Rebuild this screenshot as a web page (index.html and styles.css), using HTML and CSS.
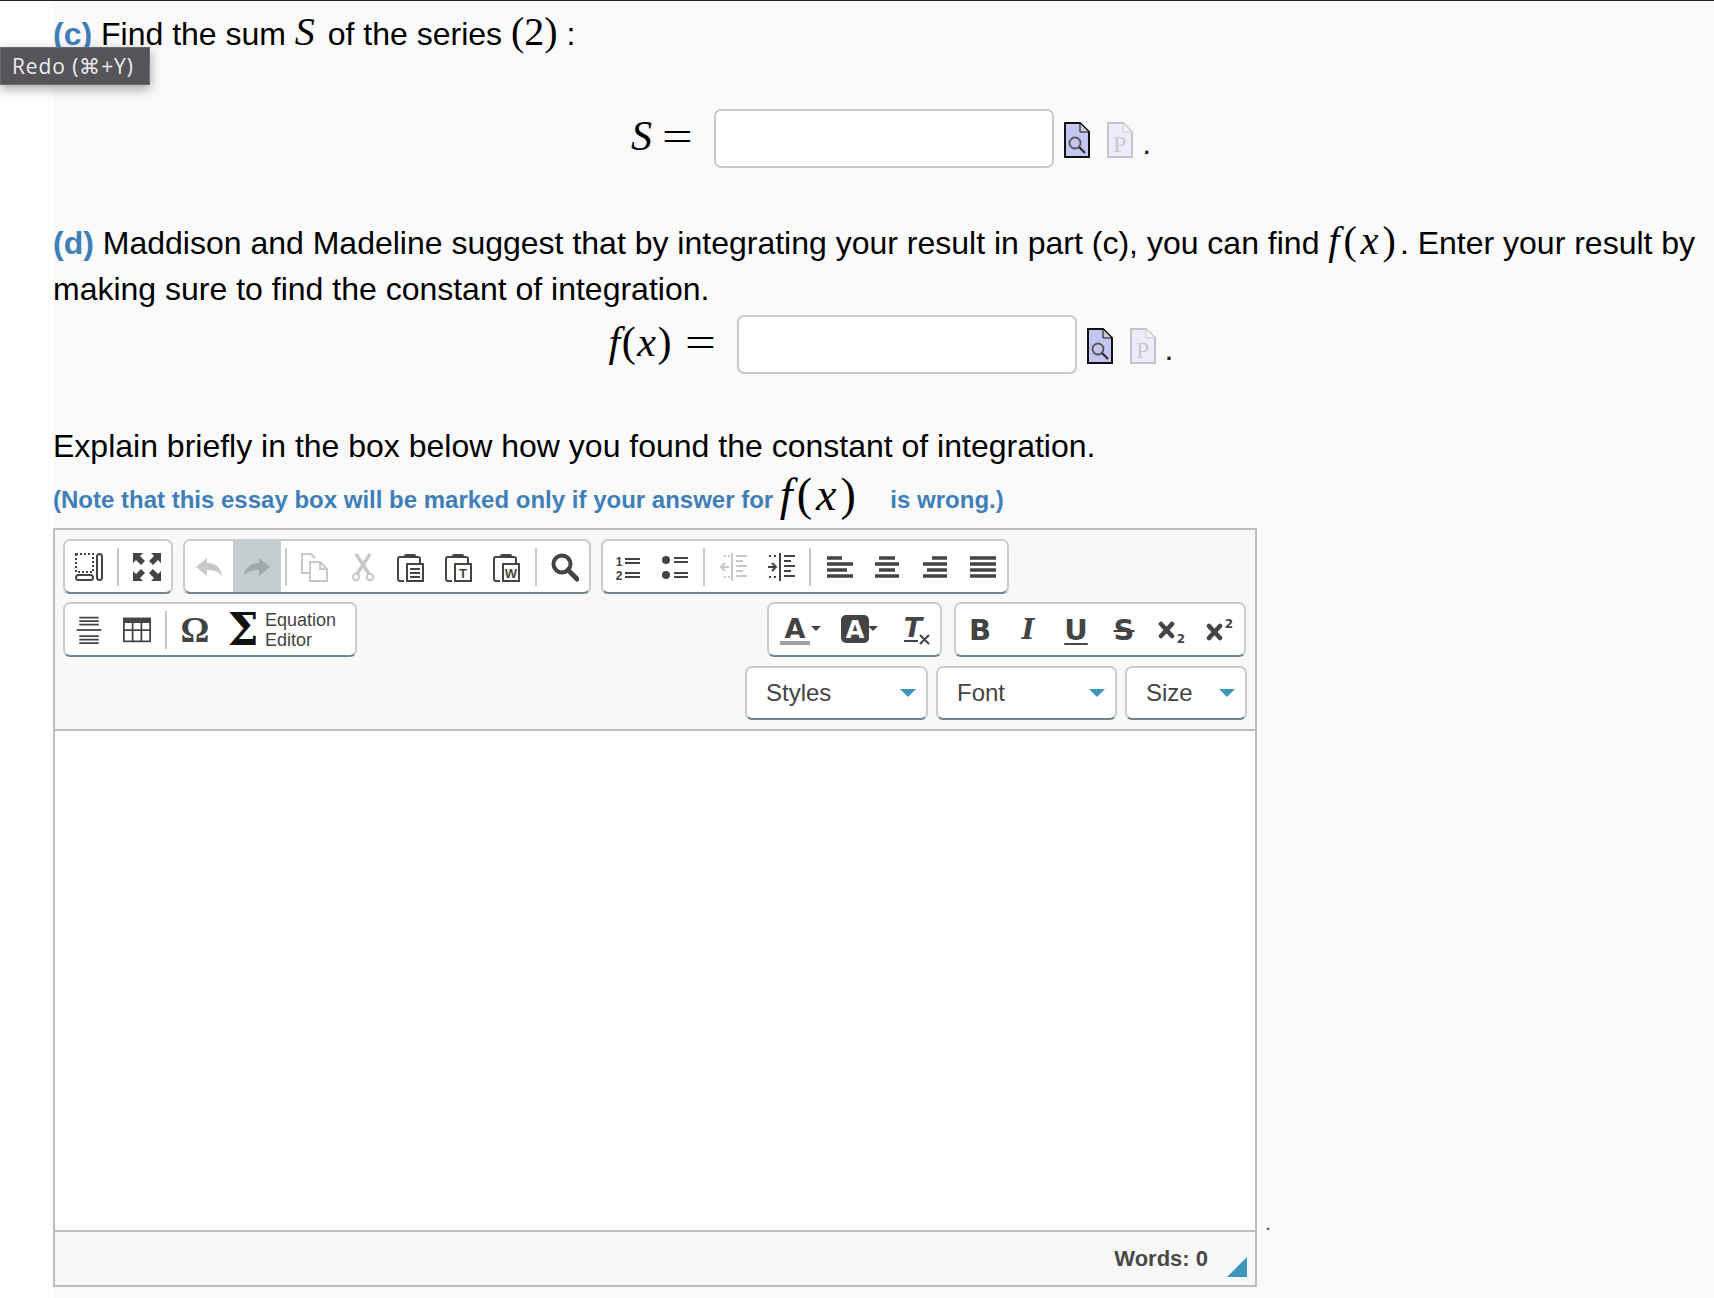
FILE: index.html
```html
<!DOCTYPE html>
<html lang="en">
<head>
<meta charset="utf-8">
<title>Question</title>
<link rel="stylesheet" href="styles.css">
</head>
<body>
<div class="tooltip">Redo (⌘+Y)</div>
<main class="panel">
  <p class="line first"><b class="part">(c)</b> Find the sum <i class="m big sp">S</i> of the series <span class="m big up">(2)</span> :</p>
  <div class="answer row-s">
    <span class="m eq"><i>S</i> <span class="equals">=</span></span>
    <span class="input"></span>
    <svg class="doc" viewBox="0 0 26 36"><path class="doc-a" d="M1 1h15l9 9v25H1z"/><path class="fold-a" d="M16 1v9h9z"/><circle cx="11" cy="21" r="5.500" fill="none" stroke="#555" stroke-width="1.800"/><path d="M15 25l6 6" stroke="#333" stroke-width="2.400"/></svg>
    <svg class="doc" viewBox="0 0 26 36"><path class="doc-b" d="M1 1h15l9 9v25H1z"/><path class="fold-b" d="M16 1v9h9z"/><text x="6" y="30" class="doc-p">P</text></svg>
    <span class="stop">.</span>
  </div>
  <p class="line part-d"><b class="part">(d)</b> Maddison and Madeline suggest that by integrating your result in part (c), you can find <span class="m big sp"><i>f</i>(<i>x</i>)</span>. Enter your result by<br>making sure to find the constant of integration.</p>
  <div class="answer row-f">
    <span class="m eq eq-f"><i>f</i>(<i>x</i>) <span class="equals">=</span></span>
    <span class="input"></span>
    <svg class="doc" viewBox="0 0 26 36"><path class="doc-a" d="M1 1h15l9 9v25H1z"/><path class="fold-a" d="M16 1v9h9z"/><circle cx="11" cy="21" r="5.500" fill="none" stroke="#555" stroke-width="1.800"/><path d="M15 25l6 6" stroke="#333" stroke-width="2.400"/></svg>
    <svg class="doc" viewBox="0 0 26 36"><path class="doc-b" d="M1 1h15l9 9v25H1z"/><path class="fold-b" d="M16 1v9h9z"/><text x="6" y="30" class="doc-p">P</text></svg>
    <span class="stop">.</span>
  </div>
  <p class="line explain">Explain briefly in the box below how you found the constant of integration.</p>
  <p class="note">(Note that this essay box will be marked only if your answer for <span class="m note-math sp"><i>f</i>(<i>x</i>)</span> is wrong.)</p>
  <div class="editor-row">
    <section class="editor">
      <div class="toolbar">
        <div class="tb-row">
          <div class="group">
            <span class="b"><svg class="i" viewBox="0 0 28 28"><rect x="1" y="1" width="17" height="18" class="dot"/><rect x="22" y="1" width="5" height="26" rx="2.500" class="ln"/><rect x="1" y="22" width="17" height="5" rx="2.500" class="ln"/></svg></span>
            <span class="sep"></span>
            <span class="b"><svg class="i" viewBox="0 0 28 28"><path class="f" d="M0 0h10L7 3l5 5-4 4-5-5-3 3z"/><path class="f" d="M28 0H18l3 3-5 5 4 4 5-5 3 3z"/><path class="f" d="M0 28h10l-3-3 5-5-4-4-5 5-3-3z"/><path class="f" d="M28 28H18l3-3-5-5 4-4 5 5 3-3z"/></svg></span>
          </div>
          <div class="group">
            <span class="b"><svg class="i" viewBox="0 0 28 28"><path class="f-off" d="M12 5L1 14l11 9v-6c6 0 11 1 15 6-1-8-6-13-15-13z"/></svg></span>
            <span class="b on"><svg class="i" viewBox="0 0 28 28"><path class="f-on" d="M16 5l11 9-11 9v-6c-6 0-11 1-15 6 1-8 6-13 15-13z"/></svg></span>
            <span class="sep"></span>
            <span class="b"><svg class="i" viewBox="0 0 28 28"><path class="ln-off" d="M8 20H1V1h9l4 4"/><path class="ln-off" d="M9 9h10l7 7v12H9z"/><path class="ln-off" d="M19 9v7h7"/></svg></span>
            <span class="b"><svg class="i" viewBox="0 0 28 28"><path d="M7 1l13 20M21 1L8 21" stroke="#c8c8c8" stroke-width="3.400" fill="none"/><circle cx="7" cy="24" r="3.200" class="ln-off"/><circle cx="21" cy="24" r="3.200" class="ln-off"/></svg></span>
            <span class="b"><svg class="i" viewBox="0 0 28 28"><path class="ln" d="M7 4H3a2 2 0 0 0-2 2v20a2 2 0 0 0 2 2h4M18 4h3a2 2 0 0 1 2 2v4"/><path class="f" d="M7 5V2.500Q7 1 9 1h8q2 0 2 1.500V5z"/><rect x="10" y="11" width="16" height="17" class="ln"/><path class="ln" d="M13 16h10M13 20h10M13 24h10"/></svg></span>
            <span class="b"><svg class="i" viewBox="0 0 28 28"><path class="ln" d="M7 4H3a2 2 0 0 0-2 2v20a2 2 0 0 0 2 2h4M18 4h3a2 2 0 0 1 2 2v4"/><path class="f" d="M7 5V2.500Q7 1 9 1h8q2 0 2 1.500V5z"/><rect x="10" y="11" width="16" height="17" class="ln"/><text x="18" y="25" class="ic-t">T</text></svg></span>
            <span class="b"><svg class="i" viewBox="0 0 28 28"><path class="ln" d="M7 4H3a2 2 0 0 0-2 2v20a2 2 0 0 0 2 2h4M18 4h3a2 2 0 0 1 2 2v4"/><path class="f" d="M7 5V2.500Q7 1 9 1h8q2 0 2 1.500V5z"/><rect x="10" y="11" width="16" height="17" class="ln"/><text x="18" y="25" class="ic-t">W</text></svg></span>
            <span class="sep"></span>
            <span class="b"><svg class="i" viewBox="0 0 28 28"><circle cx="11" cy="11" r="8.500" fill="none" stroke="#444" stroke-width="4"/><path d="M17 17l9 9" stroke="#444" stroke-width="5" stroke-linecap="round"/></svg></span>
          </div>
          <div class="group">
            <span class="b"><svg class="i" viewBox="0 0 28 28"><text x="6" y="13" class="ic-n">1</text><text x="6" y="27" class="ic-n">2</text><path class="ln" d="M12 6h15M12 10h15M12 20h15M12 24h15" stroke-width="1.500"/></svg></span>
            <span class="b"><svg class="i" viewBox="0 0 28 28"><circle cx="5" cy="7" r="4" class="f"/><circle cx="5" cy="22" r="4" class="f"/><path class="ln" d="M13 5h14M13 9h14M13 20h14M13 24h14" stroke-width="1.500"/></svg></span>
            <span class="sep"></span>
            <span class="b"><svg class="i" viewBox="0 0 28 28"><path class="ln-off" stroke-width="2" d="M13 0v28M17 3h11M17 8h7M17 13h11M17 18h7M17 23h11M10 14H2M6 10l-4 4 4 4M5 3h2M9 3h2M5 24h2M9 24h2"/></svg></span>
            <span class="b"><svg class="i" viewBox="0 0 28 28"><path class="ln" stroke-width="2" d="M13 0v28M17 3h11M17 8h7M17 13h11M17 18h7M17 23h11M1 14h8M5 10l4 4-4 4M2 3h2M7 3h2M2 24h2M7 24h2"/></svg></span>
            <span class="sep"></span>
            <span class="b"><svg class="i" viewBox="0 0 28 28"><path class="bars" d="M2 5h15M2 11h26M2 17h20M2 23h26"/></svg></span>
            <span class="b"><svg class="i" viewBox="0 0 28 28"><path class="bars" d="M6 5h16M2 11h24M6 17h16M2 23h24"/></svg></span>
            <span class="b"><svg class="i" viewBox="0 0 28 28"><path class="bars" d="M11 5h15M2 11h24M6 17h20M2 23h24"/></svg></span>
            <span class="b"><svg class="i" viewBox="0 0 28 28"><path class="bars" d="M1 5h26M1 11h26M1 17h26M1 23h26"/></svg></span>
          </div>
        </div>
        <div class="tb-row spread">
          <div class="group">
            <span class="b"><svg class="i" viewBox="0 0 28 34"><path class="ln" stroke-width="1.800" d="M3 3h22M3 7h22M3 11h22M3 24h22M3 28h22M3 32h22"/><path class="ln" stroke-width="3.400" d="M0 17h28"/></svg></span>
            <span class="b"><svg class="i" viewBox="0 0 32 28"><path class="f" d="M0 0h32v6H0z"/><path class="ln" stroke-width="2" d="M1 1h30v26H1zM1 14h30M11 6v21M21 6v21"/></svg></span>
            <span class="sep"></span>
            <span class="b sym omega">Ω</span>
            <span class="b sym sigma">Σ</span>
            <span class="eq-label">Equation<br>Editor</span>
          </div>
          <div class="tb-right">
            <div class="group">
              <span class="b wide"><svg class="fmt" viewBox="-7 0 50 32"><text x="15" y="24" class="ic-a">A</text><rect x="0" y="27" width="30" height="4" fill="#a0a0a0"/><path class="f" d="M31 12h10l-5 5z"/></svg></span>
              <span class="b wide"><svg class="fmt" viewBox="-10 0 50 32"><rect x="1" y="1" width="28" height="28" rx="5" fill="#444"/><text x="15" y="24" class="ic-a inv">A</text><path class="f" d="M28 12h10l-5 5z"/></svg></span>
              <span class="b wide"><svg class="fmt fmt-tall" viewBox="-15 -8 50 48"><text x="11" y="23" class="ic-tx">T</text><path class="ln" stroke-width="2" d="M2 27h14"/><path class="ln" stroke-width="3" d="M18 21l9 9M27 21l-9 9"/></svg></span>
            </div>
            <div class="group">
              <span class="b t">B</span>
              <span class="b t ital">I</span>
              <span class="b t under">U</span>
              <span class="b t strike">S</span>
              <span class="b"><svg class="i" viewBox="0 0 28 28"><path class="x-mark" d="M3 8l11 12M14 8L3 20"/><text x="23" y="27" class="ic-s">2</text></svg></span>
              <span class="b"><svg class="i" viewBox="0 0 28 28"><path class="x-mark" d="M3 10l11 12M14 10L3 22"/><text x="23" y="12" class="ic-s">2</text></svg></span>
            </div>
          </div>
        </div>
        <div class="tb-row end">
          <div class="combo c-styles"><span>Styles</span><i class="caret"></i></div>
          <div class="combo c-font"><span>Font</span><i class="caret"></i></div>
          <div class="combo c-size"><span>Size</span><i class="caret"></i></div>
        </div>
      </div>
      <div class="content"></div>
      <div class="footer"><span class="words">Words: 0</span><i class="resize"></i></div>
    </section>
    <span class="tail">.</span>
  </div>
</main>
</body>
</html>
```
FILE: styles.css
```css
* { box-sizing: border-box; }
html, body { margin: 0; padding: 0; }
body {
  background: #fff;
  border-top: 1px solid #222;
  height: 1298px;
  overflow: hidden;
  font-family: "Liberation Sans", Arial, sans-serif;
  color: #000;
}
.tooltip {
  position: absolute;
  left: 0;
  top: 47px;
  width: 150px;
  height: 38px;
  background: #545459;
  border: 1px solid #6a6a6e;
  color: #eee;
  font-family: "Open Sans", sans-serif;
  font-size: 21px;
  letter-spacing: .9px;
  line-height: 36px;
  padding-left: 11px;
  box-shadow: 0 4px 12px rgba(0,0,0,.35);
  white-space: nowrap;
  z-index: 5;
}
.panel { margin-left: 53px; background: #fafafa; height: 1297px; padding-top: 10px; }
.line { margin: 0; font-size: 32px; line-height: 46px; white-space: nowrap; }
.part { color: #3f7fb8; }
.m { font-family: "Liberation Serif", "DejaVu Serif", serif; }
.big { font-size: 40px; line-height: 40px; }
.sp { letter-spacing: 4px; }
.up { font-style: normal; }
.answer { display: flex; justify-content: center; align-items: center; padding-left: 15px; height: 59px; }
.row-s { margin-top: 52px; }
.row-f { margin-top: 3px; }
.part-d { margin-top: 52px; }
.eq { font-size: 42px; margin-right: 21px; margin-bottom: 6px; white-space: nowrap; }
.eq-f { letter-spacing: 1.500px; }
.equals { display: inline-block; transform: scaleX(1.3); transform-origin: left center; margin-right: 7px; letter-spacing: 0; }
.input {
  width: 340px; height: 59px; background: #fff;
  border: 2px solid #c9c9c9; border-radius: 7px;
  margin-right: 10px;
}
.doc { width: 26px; height: 36px; margin-right: 17px; margin-top: 3px; }
.doc-a { fill: #c3c6f2; stroke: #111; stroke-width: 2; }
.fold-a { fill: #c8c8d0; stroke: #111; stroke-width: 1; }
.doc-b { fill: #ececfa; stroke: #c4c4c8; stroke-width: 2; }
.fold-b { fill: #f4f4f4; stroke: #d0d0d0; stroke-width: 1; }
.doc-p { font: 24px "Liberation Serif", serif; fill: #c8c8d0; }
.stop { font-size: 32px; margin-left: -8px; margin-top: 10px; color: #222; }
.explain { margin-top: 49px; }
.note {
  margin: 6px 0 7px; height: 46px; line-height: 46px;
  font-size: 24px; font-weight: 700; color: #3f7fb8; white-space: nowrap;
}
.note-math { font-size: 46px; font-weight: 400; color: #000; margin-right: 24px; vertical-align: -2px; line-height: 40px; }
.editor-row { display: flex; }
.tail { align-self: flex-end; margin: 0 0 51px 8px; font-size: 22px; color: #555; }
.editor {
  width: 1204px; height: 759px; border: 2px solid #bdbdbd;
  background: #f8f8f8; display: flex; flex-direction: column;
}
.toolbar { height: 201px; border-bottom: 2px solid #bdbdbd; padding: 9px 9px 0 8px; }
.tb-row { display: flex; gap: 10px; margin-bottom: 8px; }
.spread { justify-content: space-between; }
.tb-right { display: flex; gap: 12px; }
.end { justify-content: flex-end; gap: 8px; margin-top: 9px; margin-right: -1px; }
.group {
  display: flex; align-items: center; height: 55px; background: #fff;
  border: 2px solid #c6cdd1; border-bottom-color: #6f8691; border-radius: 7px;
}
.b {
  display: flex; align-items: center; justify-content: center;
  width: 48px; height: 51px; color: #444; flex: none;
}
.wide { width: 57px; }
.on { background: #c5cdd0; }
.sep { width: 2px; height: 38px; background: #c8c8c8; margin: 0 4px; flex: none; }
.i { width: 28px; height: 30px; }
.fmt { height: 32px; width: 50px; }
.fmt-tall { height: 48px; }
.f { fill: #444; }
.f-off { fill: #c8c8c8; }
.f-on { fill: #a2a9ac; }
.ln { fill: none; stroke: #444; stroke-width: 2; }
.ln-off { fill: none; stroke: #c8c8c8; stroke-width: 2; }
.dot { fill: none; stroke: #444; stroke-width: 2; stroke-dasharray: 2 2; }
.bars { fill: none; stroke: #444; stroke-width: 3.600; }
.x-mark { fill: none; stroke: #444; stroke-width: 4.500; stroke-linecap: round; }
.ic-t { font: 700 13px "Liberation Sans", sans-serif; fill: #444; text-anchor: middle; }
.ic-n { font: 700 12px "Liberation Sans", sans-serif; fill: #444; text-anchor: middle; }
.ic-s { font: 700 12px "DejaVu Sans", sans-serif; fill: #444; text-anchor: middle; }
.ic-a { font: 700 27px "DejaVu Sans", sans-serif; fill: #444; text-anchor: middle; }
.inv { fill: #fff; font-size: 24px; }
.ic-tx { font: italic 700 27px "DejaVu Sans", sans-serif; fill: #444; text-anchor: middle; }
.sym { font-family: "DejaVu Serif", serif; font-weight: 700; }
.omega { font-size: 36px; font-family: "Liberation Serif", serif; }
.sigma { font-size: 44px; color: #111; }
.eq-label { font-size: 18px; line-height: 20px; color: #444; margin-left: -2px; padding-right: 19px; white-space: nowrap; }
.t { font: 700 29px "DejaVu Sans", sans-serif; }
.ital { font: italic 700 27px "DejaVu Serif", serif; }
.under { text-decoration: underline; text-underline-offset: 3px; text-decoration-thickness: 2px; }
.strike { text-decoration: line-through; text-decoration-thickness: 2px; }
.combo {
  display: flex; align-items: center; justify-content: space-between;
  height: 54px; background: #fff; padding: 0 10px 0 19px;
  border: 2px solid #c6cdd1; border-bottom-color: #6f8691; border-radius: 7px;
  font-size: 24px; color: #444;
}
.c-styles { width: 183px; }
.c-font { width: 181px; }
.c-size { width: 122px; }
.caret { width: 0; height: 0; border: 8px solid transparent; border-bottom: 0; border-top: 8px solid #3f96bd; }
.content { height: 501px; background: #fff; border-bottom: 2px solid #bdbdbd; }
.footer { flex: 1; display: flex; justify-content: flex-end; align-items: flex-end; padding: 0 8px 8px 0; gap: 19px; }
.words { font-size: 22px; font-weight: 700; color: #484848; margin-bottom: 5px; }
.resize { width: 20px; height: 20px; background: #3f96bd; clip-path: polygon(100% 0, 100% 100%, 0 100%); }
```
